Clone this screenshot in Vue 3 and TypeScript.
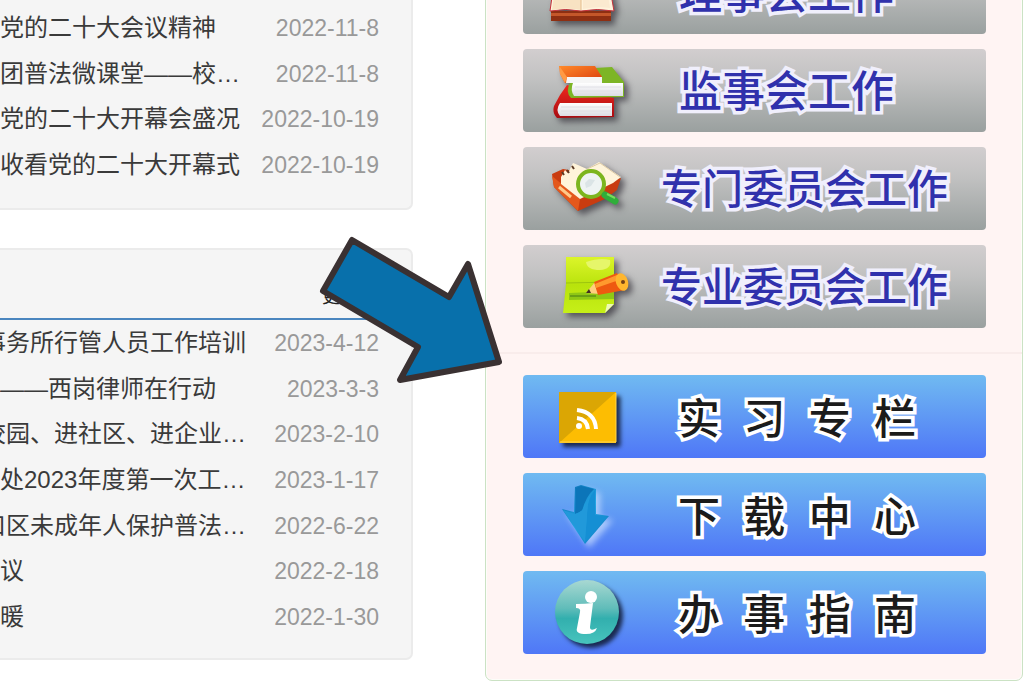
<script setup lang="ts">
interface NewsItem {
  title: string
  date: string
  deep?: boolean
}

interface NavItem {
  label: string
  icon: string
  long?: boolean
}

const notices: NewsItem[] = [
  { title: '党的二十大会议精神', date: '2022-11-8' },
  { title: '团普法微课堂——校…', date: '2022-11-8' },
  { title: '党的二十大开幕会盛况', date: '2022-10-19' },
  { title: '收看党的二十大开幕式', date: '2022-10-19' },
]

const activities: NewsItem[] = [
  { title: '事务所行管人员工作培训', date: '2023-4-12', deep: true },
  { title: '——西岗律师在行动', date: '2023-3-3' },
  { title: '校园、进社区、进企业…', date: '2023-2-10', deep: true },
  { title: '处2023年度第一次工…', date: '2023-1-17' },
  { title: '口区未成年人保护普法…', date: '2022-6-22', deep: true },
  { title: '议', date: '2022-2-18' },
  { title: '暖', date: '2022-1-30' },
]

const committees: NavItem[] = [
  { label: '理事会工作', icon: 'open-book' },
  { label: '监事会工作', icon: 'books' },
  { label: '专门委员会工作', icon: 'search', long: true },
  { label: '专业委员会工作', icon: 'note', long: true },
]

const services: NavItem[] = [
  { label: '实  习  专  栏', icon: 'rss' },
  { label: '下  载  中  心', icon: 'download' },
  { label: '办  事  指  南', icon: 'info' },
]
</script>

<template>
  <div class="page">
    <main class="news">
      <section class="panel panel-first">
        <ul class="list">
          <li v-for="(item, i) in notices" :key="i">
            <a href="#" class="title">{{ item.title }}</a>
            <time class="date">{{ item.date }}</time>
          </li>
        </ul>
      </section>
      <section class="panel">
        <header class="panel-head"><a href="#" class="more">更多&gt;&gt;</a></header>
        <ul class="list list-tall">
          <li v-for="(item, i) in activities" :key="i">
            <a href="#" class="title" :class="{ deep: item.deep }">{{ item.title }}</a>
            <time class="date">{{ item.date }}</time>
          </li>
        </ul>
      </section>
    </main>

    <aside class="side">
      <nav class="group">
        <a v-for="item in committees" :key="item.label" href="#" class="tile gray">
          <svg class="icon" viewBox="0 0 128 83" aria-hidden="true">
            <defs>
              <linearGradient id="orange" x1="0" y1="0" x2="1" y2="1">
                <stop offset="0" stop-color="#ff8a2a" /><stop offset="1" stop-color="#d93a0c" />
              </linearGradient>
              <linearGradient id="lime" x1="0" y1="0" x2="0" y2="1">
                <stop offset="0" stop-color="#dcf52a" /><stop offset="0.5" stop-color="#b9e30c" /><stop offset="1" stop-color="#c6ef18" />
              </linearGradient>
              <linearGradient id="red" x1="0" y1="0" x2="0" y2="1">
                <stop offset="0" stop-color="#f0281e" /><stop offset="1" stop-color="#a80c12" />
              </linearGradient>
              <linearGradient id="paper" x1="0" y1="0" x2="0" y2="1">
                <stop offset="0" stop-color="#ffffff" /><stop offset="1" stop-color="#dcdce4" />
              </linearGradient>
            </defs>
            <g v-if="item.icon === 'open-book'">
              <path d="M28 60h60v10H28z" fill="#8e2f12" />
              <path d="M28 62h60v3H28z" fill="#c4572a" />
              <path d="M31 32 27 60q16-3 31 0 16-3 33 0L86 32q-14-4-28 1-14-5-27-1z" fill="#fff3dc" stroke="#c8323c" />
              <path d="M31 45 29 59q15-3 29 0V45z" fill="#f8e2c2" />
              <path d="M58 34v25" stroke="#e4bd8c" />
              <path d="M60 58q14-3 27-1l-2-13-25 1z" fill="#fbead0" />
            </g>
            <g v-else-if="item.icon === 'books'">
              <path d="M44 36 37 46 31 57q-2 7 3 12l57-1V49l-9-2z" fill="url(#red)" />
              <path d="M37 54h52v13H37q-5-6 0-13z" fill="url(#paper)" />
              <path d="M38 58h50M38 62h50" stroke="#dedee4" />
              <path d="m72 19 17-1 12 15v15l-53 1q-6-6-1-15l27-1z" fill="#7db526" />
              <path d="M50 34h50v13H51q-4-6-1-13z" fill="url(#paper)" />
              <path d="M52 38h46M52 42h46" stroke="#e0e0e6" />
              <path d="M36 17h36l7 11v6H42l-5-9z" fill="url(#orange)" />
              <path d="M44 28h35v6H43z" fill="#f6f6f6" />
              <path d="m37 18 7 10-2 6-5-9z" fill="#ff9a44" />
            </g>
            <g v-else-if="item.icon === 'search'">
              <path d="m29 27 11-5 54 10 4-1-4 12-12 9-27 12L31 40z" fill="#c93c10" />
              <path d="m29 29 28 23-2 12L31 40z" fill="#e4581c" />
              <path d="m38 30 4-7 3 3 5-10 5 2 9 4 12-7 22 15-8 6-33 16-19-15z" fill="#fff4da" />
              <path d="m64 22 13-6 20 14" fill="none" stroke="#dcc9a4" />
              <path d="m39 25 2 3m3-5 2 3m3-7 2 3" stroke="#5c3b25" stroke-width="2" />
              <path d="m36 40 12 10" stroke="#ffc98a" stroke-width="3" />
              <circle cx="68" cy="37" r="13" fill="#eef3f3" stroke="#7cb51e" stroke-width="4" />
              <path d="m62 36 4-4 6 1-4 6-5 2z" fill="#dbe4e6" />
              <path d="m82 48 10 6" stroke="#2fae3a" stroke-width="7" stroke-linecap="round" />
              <path d="m84 47 8 4" stroke="#76db5c" stroke-width="2" />
            </g>
            <g v-else>
              <path d="M43 12h48v47l-9 9H40l3-29z" fill="url(#lime)" />
              <path d="m43 38 48-1" stroke="#9cc40e" />
              <path d="M63 17q14-5 24-2 2 9-10 10-13 0-14-8z" fill="#e6f66a" />
              <path d="m46 48 45-2v8l-45 1z" fill="#8fc815" />
              <path d="M47 51h26" stroke="#447a16" />
              <path d="m82 68 2-9 7 0z" fill="#eefab4" />
              <path d="m63 48 9-11 5 12z" fill="#ffcf7e" />
              <path d="m63 48 3-4 2 4z" fill="#403020" />
              <path d="m71 37 23-9 8 17-27 5z" fill="#ee5a10" />
              <path d="m72 39 22-9 2 5-23 8z" fill="#ff9a2e" />
              <ellipse cx="99" cy="37" rx="6" ry="9" fill="#ffb62e" transform="rotate(-20 99 37)" />
              <circle cx="100" cy="37" r="2" fill="#754116" />
            </g>
          </svg>
          <span class="label" :class="{ long: item.long }">{{ item.label }}</span>
        </a>
      </nav>
      <nav class="group group-last">
        <a v-for="item in services" :key="item.label" href="#" class="tile blue">
          <svg class="icon" :class="item.icon" viewBox="0 0 128 83" aria-hidden="true">
            <defs>
              <linearGradient id="arrow" x1="0" y1="0" x2="1" y2="1">
                <stop offset="0" stop-color="#0867ac" /><stop offset="0.5" stop-color="#23a5e4" /><stop offset="1" stop-color="#0872ba" />
              </linearGradient>
              <linearGradient id="teal" x1="0" y1="0" x2="0" y2="1">
                <stop offset="0" stop-color="#a8d8d2" /><stop offset="0.45" stop-color="#5fbcb9" /><stop offset="0.6" stop-color="#32afae" /><stop offset="1" stop-color="#48c4bd" />
              </linearGradient>
            </defs>
            <g v-if="item.icon === 'rss'">
              <path d="M36 17h57v51H36z" fill="#fdbd02" />
              <path d="M36 17h57L36 68z" fill="#dba604" />
              <path d="M37 67h56V18" fill="none" stroke="#ffd54e" />
              <circle cx="56" cy="51" r="3" fill="#fff" />
              <path d="M54 43q10 1 11 11M54 35q18 2 19 19" fill="none" stroke="#fff" stroke-width="4" />
            </g>
            <g v-else-if="item.icon === 'download'">
              <path d="m52 14 6-2 15 4v25l13 2-24 28-23-35 12 3z" fill="url(#arrow)" />
              <path d="m53 15 5-2 13 3q-8 7-12 22l-7 3z" fill="#0c75b9" />
              <path d="m72 17v25l12 2-22 25 2-29q0-14 8-23z" fill="#158fd4" />
              <path d="m40 37 12 4q8-2 13-12l-3 40z" fill="#2199da" />
            </g>
            <g v-else>
              <circle cx="64" cy="41" r="32" fill="url(#teal)" />
              <circle cx="68" cy="26" r="6" fill="#fff" />
              <path d="M53 33q10 0 17-1l-3 24q0 5 7 1-2 6-11 6-11 0-9-6l3-16q1-4-4-4z" fill="#fff" />
            </g>
          </svg>
          <span class="label dark">{{ item.label }}</span>
        </a>
      </nav>
    </aside>

    <svg class="pointer" viewBox="0 0 186 150" aria-hidden="true">
      <path d="M34 5 131 62 150 29 181 127 82 145 100 112 5 56Z" />
    </svg>
  </div>
</template>

<style>
body {
  margin: 0;
  background: #fff;
}
</style>

<style scoped>
.page {
  position: relative;
  display: grid;
  grid-template-columns: 413fr 538fr;
  gap: 72px;
  height: 100vh;
  padding-right: 1px;
  box-sizing: border-box;
  overflow: hidden;
  font-family: "Liberation Sans", "Noto Sans CJK SC", sans-serif;
}

.news {
  display: flex;
  flex-direction: column;
  gap: 38px;
}

.panel {
  padding-right: 32px;
  padding-bottom: 18px;
  background: #f5f5f5;
  border: 2px solid #ebebeb;
  border-left: 0;
  border-radius: 0 7px 7px 0;
}

.panel-first {
  border-top: 0;
  border-top-right-radius: 0;
  padding-top: 5px;
  padding-bottom: 20px;
}

.panel-head {
  display: flex;
  justify-content: flex-end;
  align-items: flex-end;
  height: 70px;
  margin-right: -32px;
  padding-right: 32px;
  box-sizing: border-box;
  padding-bottom: 8px;
  border-bottom: 2px solid #4a86bf;
}

.more {
  font-size: 18px;
  line-height: 26px;
  color: #222;
  text-decoration: none;
}

.list {
  display: grid;
  grid-auto-rows: 1fr;
  min-height: 183px;
  margin: 0;
  padding: 0;
  list-style: none;
}

.list-tall {
  min-height: 320px;
}

.list li {
  display: flex;
  justify-content: space-between;
  align-items: center;
}

.title {
  font-size: 24px;
  line-height: 36px;
  color: #3a3a3a;
  text-decoration: none;
  white-space: nowrap;
}

.title.deep {
  margin-left: -18px;
}

.date {
  font-size: 23px;
  line-height: 36px;
  color: #999;
  white-space: nowrap;
}

.side {
  align-self: start;
  margin-top: -64px;
  background: #fff4f3;
  border: 1px solid #cbe2c4;
  border-radius: 7px;
  box-shadow: inset 0 0 0 1px #fdfdf9;
}

.group {
  display: flex;
  flex-direction: column;
  gap: 15px;
  padding: 14px 36px 24px 37px;
}

.group-last {
  padding: 21px 36px 26px 37px;
  border-top: 2px solid #f9eceb;
}

.tile {
  display: flex;
  align-items: center;
  height: 83px;
  border-radius: 4px;
  text-decoration: none;
}

.gray {
  background: linear-gradient(#d2cecf, #c2c2c2 35%, #9aa09f);
}

.blue {
  background: linear-gradient(#70baf1, #4f77f7);
}

.icon {
  flex: none;
  width: 128px;
  height: 83px;
  filter: drop-shadow(4px 4px 3px rgba(30, 25, 35, 0.6));
}

.icon.rss,
.icon.info {
  filter: drop-shadow(4px 4px 2px rgba(15, 25, 50, 0.85));
}

.icon.download {
  filter: drop-shadow(4px 4px 3px rgba(205, 225, 255, 0.7));
}

.label {
  padding-left: 28px;
  padding-bottom: 6px;
  font-family: "Noto Sans CJK SC", sans-serif;
  font-size: 43px;
  font-weight: 500;
  line-height: 60px;
  color: #3031ac;
  white-space: pre;
  -webkit-text-stroke: 7px #f0effc;
  paint-order: stroke fill;
}

.label.long {
  padding-left: 10px;
  font-size: 41px;
}

.label.dark {
  padding-top: 7px;
  padding-bottom: 0;
  padding-left: 27px;
  font-family: "Liberation Sans", "Noto Sans CJK SC", sans-serif;
  font-size: 42px;
  color: #1b1b1b;
  -webkit-text-stroke-color: #fff;
}

.pointer {
  position: absolute;
  top: 235px;
  left: 318px;
  width: 186px;
  height: 150px;
}

.pointer path {
  fill: #0870ab;
  stroke: #3a3132;
  stroke-width: 6px;
  stroke-linejoin: round;
}
</style>
